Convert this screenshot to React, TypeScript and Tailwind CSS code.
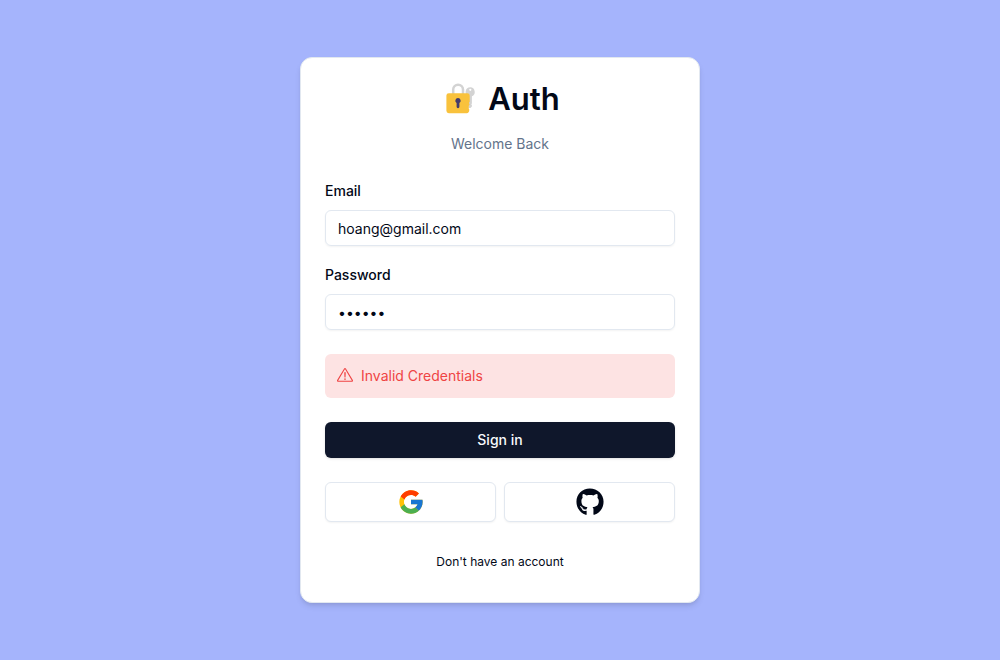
import { useState } from "react";
import type { InputHTMLAttributes } from "react";
import { FcGoogle } from "react-icons/fc";
import { FaGithub } from "react-icons/fa";
import { RxExclamationTriangle } from "react-icons/rx";

function LockWithKey() {
  return (
    <svg viewBox="0 0 40 36" className="h-9 w-10" aria-hidden="true">
      <path
        d="M13.2 14V7.6a4.9 4.9 0 0 1 9.8 0V14"
        fill="none"
        stroke="#d3d3d3"
        strokeWidth="2.5"
      />
      <path
        d="M30.3 5.3a4.7 4.7 0 0 0-1.9 9V25a1 1 0 0 0 1 1h.6a1 1 0 0 0 .7-.3l1.2-1.2v-1.6l-.7-.7.7-.8v-7.1a4.7 4.7 0 0 0-1.6-9Zm0 1.4a1.1 1.1 0 1 1 0 2.2 1.1 1.1 0 0 1 0-2.2Z"
        fill="#d3d3d3"
      />
      <path
        d="M8.8 11.2h18.6a2.3 2.3 0 0 1 2.3 2.3v6.3a1.6 1.6 0 0 0-.7 1.3c0 .6.3 1 .7 1.3a2.2 2.2 0 0 0-.9 1.7v2.6a1.5 1.5 0 0 1 .5 1.1c0 2-1 3.4-2.6 3.4H8.8a2.4 2.4 0 0 1-2.4-2.4V13.6a2.4 2.4 0 0 1 2.4-2.4Z"
        fill="#f9c23c"
      />
      <path
        d="M18 16a2.7 2.7 0 0 0-1.4 5v3.8a1.4 1.4 0 0 0 2.8 0V21A2.7 2.7 0 0 0 18 16Z"
        fill="#433b6b"
      />
    </svg>
  );
}

type FieldProps = InputHTMLAttributes<HTMLInputElement> & { id: string; label: string };

function Field({ id, label, ...props }: FieldProps) {
  return (
    <div className="flex flex-col gap-2">
      <label htmlFor={id} className="pt-0.5 text-sm leading-[22px] font-medium">
        {label}
      </label>
      <input
        id={id}
        className="h-9 w-full rounded-md border border-slate-200 bg-transparent px-3 py-1 text-sm shadow-xs outline-none focus-visible:ring-1 focus-visible:ring-slate-950"
        {...props}
      />
    </div>
  );
}

const socialButton =
  "flex h-10 flex-1 items-center justify-center rounded-md border border-slate-200 bg-white shadow-xs hover:bg-slate-100";

export default function App() {
  const [email, setEmail] = useState("hoang@gmail.com");
  const [password, setPassword] = useState("123456");

  return (
    <main className="flex min-h-screen items-center justify-center bg-[#a5b4fc] font-['Inter',sans-serif] text-[#020817]">
      <section className="w-full max-w-[400px] rounded-xl border border-slate-200 bg-white p-6 shadow-md">
        <header className="flex flex-col items-center gap-4">
          <h1 className="flex items-center gap-2 text-[31px] font-semibold">
            <LockWithKey />
            <span className="pb-0.5 leading-8">Auth</span>
          </h1>
          <p className="text-sm text-[#64748b]">Welcome Back</p>
        </header>

        <form className="mt-6 flex flex-col gap-6" onSubmit={(e) => e.preventDefault()}>
          <div className="flex flex-col gap-4">
            <Field
              id="email"
              label="Email"
              type="email"
              value={email}
              onChange={(e) => setEmail(e.target.value)}
            />
            <Field
              id="password"
              label="Password"
              type="password"
              value={password}
              onChange={(e) => setPassword(e.target.value)}
            />
          </div>
          <div
            role="alert"
            className="flex items-center gap-2 rounded-md bg-[#fde3e3] p-3 text-sm text-[#ef4444]"
          >
            <RxExclamationTriangle className="size-4" />
            <p>Invalid Credentials</p>
          </div>
          <button
            type="submit"
            className="h-9 w-full rounded-md bg-slate-900 text-sm font-medium text-slate-50 shadow-sm hover:bg-slate-800"
          >
            Sign in
          </button>
        </form>

        <div className="mt-6 flex gap-2">
          <button type="button" aria-label="Sign in with Google" className={socialButton}>
            <FcGoogle className="size-7" />
          </button>
          <button type="button" aria-label="Sign in with GitHub" className={socialButton}>
            <FaGithub className="size-7" />
          </button>
        </div>

        <footer className="mt-6">
          <a
            href="#register"
            className="flex h-8 items-center justify-center text-xs hover:underline"
          >
            Don't have an account
          </a>
        </footer>
      </section>
    </main>
  );
}
